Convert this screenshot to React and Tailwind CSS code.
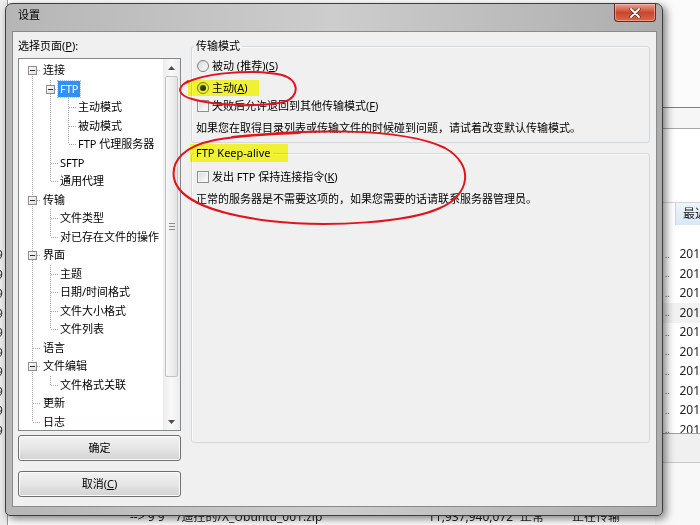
import React from 'react';

const tree = [
  { t: '连接', l: 0, box: true },
  { t: 'FTP', l: 1, box: true, sel: true },
  { t: '主动模式', l: 2 },
  { t: '被动模式', l: 2 },
  { t: 'FTP 代理服务器', l: 2 },
  { t: 'SFTP', l: 1 },
  { t: '通用代理', l: 1 },
  { t: '传输', l: 0, box: true },
  { t: '文件类型', l: 1 },
  { t: '对已存在文件的操作', l: 1 },
  { t: '界面', l: 0, box: true },
  { t: '主题', l: 1 },
  { t: '日期/时间格式', l: 1 },
  { t: '文件大小格式', l: 1 },
  { t: '文件列表', l: 1 },
  { t: '语言', l: 0 },
  { t: '文件编辑', l: 0, box: true },
  { t: '文件格式关联', l: 1 },
  { t: '更新', l: 0 },
  { t: '日志', l: 0 },
];

const LX = [13, 31, 49];
const cy = (i) => Math.round(11.25 + 18.5 * i);
const rowTop = (i) => Math.round(2 + 18.5 * i);

function TreeLines() {
  const lines = [];
  const boxes = [];
  const roots = tree.map((n, i) => (n.l === 0 ? i : -1)).filter((i) => i >= 0);
  lines.push(
    <line key="rv" x1={LX[0] + 0.5} y1={cy(roots[0])} x2={LX[0] + 0.5} y2={cy(roots[roots.length - 1])} />
  );
  tree.forEach((n, i) => {
    lines.push(<line key={'t' + i} x1={LX[n.l] + 0.5} y1={cy(i) + 0.5} x2={LX[n.l] + 8} y2={cy(i) + 0.5} />);
    const kids = [];
    for (let j = i + 1; j < tree.length && tree[j].l > n.l; j++) if (tree[j].l === n.l + 1) kids.push(j);
    if (kids.length)
      lines.push(
        <line key={'v' + i} x1={LX[n.l + 1] + 0.5} y1={rowTop(kids[0])} x2={LX[n.l + 1] + 0.5} y2={cy(kids[kids.length - 1])} />
      );
    if (n.box) {
      const x = LX[n.l];
      const c = cy(i);
      boxes.push(
        <g key={'b' + i}>
          <rect x={x - 4 + 0.5} y={c - 4 + 0.5} width={8} height={8} fill="url(#bx)" stroke="#8e8e8e" />
          <line x1={x - 2} y1={c + 0.5} x2={x + 3} y2={c + 0.5} stroke="#2b2b2b" />
        </g>
      );
    }
  });
  return (
    <svg className="absolute left-0 top-0" width="144" height="371" shapeRendering="crispEdges">
      <defs>
        <linearGradient id="bx" x1="0" y1="0" x2="1" y2="1">
          <stop offset="0" stopColor="#ffffff" />
          <stop offset="1" stopColor="#dcdcdc" />
        </linearGradient>
      </defs>
      <g stroke="#a5a5a5" strokeDasharray="1 1">{lines}</g>
      {boxes}
    </svg>
  );
}

function Arrow({ down }) {
  return (
    <svg width="7" height="4" viewBox="0 0 7 4">
      {down ? <path d="M0 0 H7 L3.5 4 Z" fill="#4d4d4d" /> : <path d="M0 4 H7 L3.5 0 Z" fill="#4d4d4d" />}
    </svg>
  );
}

function Tree() {
  return (
    <div className="flex h-[373px] border border-[#828790] bg-white">
      <div className="relative flex-1 overflow-hidden pt-[2px]">
        <TreeLines />
        {tree.map((n, i) => (
          <div
            key={i}
            className={
              'relative flex h-[18.5px] items-center whitespace-nowrap ' +
              (n.l === 0 ? 'pl-[22px]' : n.l === 1 ? 'pl-[39px]' : 'pl-[57px]')
            }
          >
            <span
              className={
                'px-[2px] h-[16px] leading-[16px] ' +
                (n.sel ? 'bg-[#3390f0] text-white outline outline-1 outline-dotted outline-[#9cc8f8]' : 'text-black')
              }
            >
              {n.t}
            </span>
          </div>
        ))}
      </div>
      <div className="flex w-[17px] flex-col bg-gradient-to-r from-[#ececec] via-[#f9f9f9] to-[#ececec]">
        <div className="flex h-[17px] items-center justify-center">
          <Arrow />
        </div>
        <div className="flex-1 px-[2px]">
          <div className="flex h-[301px] flex-col items-center justify-center gap-[2px] rounded-[2px] border border-[#c2c2c2] bg-gradient-to-r from-[#f7f7f7] via-[#efefef] to-[#e4e4e4]">
            <div className="h-px w-[6px] bg-[#8c8c8c]" />
            <div className="h-px w-[6px] bg-[#8c8c8c]" />
            <div className="h-px w-[6px] bg-[#8c8c8c]" />
          </div>
        </div>
        <div className="flex h-[17px] items-center justify-center">
          <Arrow down />
        </div>
      </div>
    </div>
  );
}

function Btn({ children, className = '' }) {
  return (
    <div
      className={
        'flex h-[26px] items-center justify-center rounded-[3px] border border-[#707070] bg-gradient-to-b from-[#f3f3f3] via-[#e6e6e6] to-[#d3d3d3] leading-[14px] text-black shadow-[inset_0_0_0_1px_#fbfbfb] ' +
        className
      }
    >
      {children}
    </div>
  );
}

function Radio({ checked }) {
  return (
    <div className="flex h-[12px] w-[12px] items-center justify-center rounded-full border border-[#7f7f7f] bg-gradient-to-br from-[#d8d8d8] to-[#ffffff]">
      {checked && <div className="h-[6px] w-[6px] rounded-full bg-gradient-to-br from-[#3e5a3e] to-[#1b2a1b]" />}
    </div>
  );
}

function Check() {
  return (
    <div className="h-[12px] w-[12px] border border-[#8f8f8f] bg-gradient-to-br from-[#dadada] to-[#ffffff] shadow-[inset_0_0_0_1px_#f4f4f4]" />
  );
}

function U({ children }) {
  return <span className="underline underline-offset-[1px]">{children}</span>;
}

function Client() {
  return (
    <div className="flex flex-1 border border-[#8a8a8a] bg-[#f0f0f0] pl-[5px] pt-[6px]">
      <div className="flex w-[163px] flex-col">
        <div className="h-[20px] pt-[1px] leading-[13px]">
          选择页面(<U>P</U>):
        </div>
        <Tree />
        <Btn className="mt-[4px]">确定</Btn>
        <Btn className="mt-[10px]">
          <span>
            取消(<U>C</U>)
          </span>
        </Btn>
      </div>
      <div className="ml-[10px] flex w-[459px] flex-col">
        <fieldset className="rounded-[3px] border border-[#d2d8dc] pb-[5px] pl-[2px] shadow-[inset_1px_1px_0_#fafafa]">
          <legend className="h-[16px] px-[2px] leading-[16px]">传输模式</legend>
          <div className="mt-[3px] flex h-[18px] items-center gap-[3px] pl-[3px]">
            <Radio />
            <span>
              被动 (推荐)(<U>S</U>)
            </span>
          </div>
          <div className="mt-[4px] flex h-[18px] items-center gap-[3px] pl-[3px]">
            <Radio checked />
            <span>
              主动(<U>A</U>)
            </span>
          </div>
          <div className="flex h-[18px] items-center gap-[3px] pl-[3px]">
            <Check />
            <span>
              失败后允许退回到其他传输模式(<U>F</U>)
            </span>
          </div>
          <div className="mt-[4px] flex h-[18px] items-center pl-[2px]">
            如果您在取得目录列表或传输文件的时候碰到问题，请试着改变默认传输模式。
          </div>
        </fieldset>
        <fieldset className="mt-[2px] h-[298px] rounded-[3px] border border-[#d2d8dc] pl-[2px] shadow-[inset_1px_1px_0_#fafafa]">
          <legend className="h-[16px] px-[2px] leading-[16px]">FTP Keep-alive</legend>
          <div className="mt-[7px] flex h-[18px] items-center gap-[3px] pl-[3px]">
            <Check />
            <span>
              发出 FTP 保持连接指令(<U>K</U>)
            </span>
          </div>
          <div className="mt-[4px] flex h-[18px] items-center pl-[2px]">
            正常的服务器是不需要这项的，如果您需要的话请联系服务器管理员。
          </div>
        </fieldset>
      </div>
    </div>
  );
}

function Dialog() {
  return (
    <div className="absolute left-[5px] top-[3px] flex h-[513px] w-[658px] flex-col rounded-b-[5px] rounded-t-[7px] border border-[#3e3e3e] bg-gradient-to-r from-[#b6b6b6] via-[#cdcdcd] to-[#adadad] pb-[8px] pl-[6px] pr-[5px] shadow-[3px_3px_8px_rgba(0,0,0,0.5)]">
      <div className="flex h-[27px]">
        <div className="pl-[6px] pt-[4px] leading-[14px] text-black">设置</div>
        <div className="ml-auto mr-[1px] flex h-[18px] w-[42px] items-center justify-center rounded-b-[4px] border border-t-0 border-[#6a2a20] bg-gradient-to-b from-[#e9a493] via-[#c8462c] to-[#d9674c] shadow-[inset_0_0_0_1px_rgba(255,200,190,0.5)]">
          <svg width="12" height="10" viewBox="0 0 12 10">
            <path d="M2 1 L10 9 M10 1 L2 9" stroke="#5b2a22" strokeWidth="3.2" strokeLinecap="round" />
            <path d="M2 1 L10 9 M10 1 L2 9" stroke="#ffffff" strokeWidth="1.8" strokeLinecap="round" />
          </svg>
        </div>
      </div>
      <Client />
    </div>
  );
}

const rows = [0, 1, 2, 3, 4, 5, 6, 7, 8, 9];

function Background() {
  return (
    <div className="absolute inset-0">
      <div className="absolute left-0 top-0 flex h-full w-[8px] flex-col overflow-hidden border-r border-[#9a9a9a] bg-[#ececec]">
        <div className="h-[245px]" />
        {rows.map((r) => (
          <div key={r} className="-ml-[4px] h-[19.5px] text-[12px] leading-[19.5px] text-[#333]">
            9
          </div>
        ))}
      </div>
      <div className="absolute right-0 top-0 flex h-full w-[45px] flex-col text-[12px] text-[#222]">
        <div className="h-[107px] bg-[#fbfbfb]" />
        <div className="h-px bg-[#7f7f7f]" />
        <div className="h-[20px] bg-[#f6f6f6]" />
        <div className="h-px bg-[#a8a8a8]" />
        <div className="h-[73px] bg-white" />
        <div className="h-px bg-[#d5d5d5]" />
        <div className="flex h-[22px]">
          <div className="w-[20px] bg-white" />
          <div className="flex-1 overflow-hidden whitespace-nowrap border-l border-[#c6d6e6] bg-gradient-to-b from-[#eef5fc] to-[#d9e7f5] pl-[7px] leading-[22px]">最近</div>
        </div>
        <div className="h-[208px] overflow-hidden bg-white">
          <div className="h-[19.5px]" />
          {rows.map((r) => (
            <div key={r} className={'flex h-[19.5px] items-center ' + (r === 3 ? 'bg-[#f2f2f2]' : '')}>
              <span className="w-[20px] pl-[10px] text-[9px] text-[#555]">‥</span>
              <span className="pl-[8px]">201</span>
            </div>
          ))}
        </div>
        <div className="h-px bg-[#a0a0a0]" />
        <div className="h-[28px] bg-[#f0f0f0]" />
        <div className="h-px bg-[#c8c8c8]" />
        <div className="flex-1 bg-[#f8f8f8]" />
      </div>
      <div className="absolute left-0 top-[509px] flex h-[16px] w-full pl-[130px] text-[12px] leading-[16px] text-[#222]">
        <span className="w-[47px]">--&gt; 9 9</span>
        <span className="w-[251px]">/遥控的/X_Ubuntu_001.zip</span>
        <span className="w-[92px]">11,937,940,072</span>
        <span className="w-[52px]">正常</span>
        <span>正在传输</span>
      </div>
    </div>
  );
}

function Annotations() {
  return (
    <div className="pointer-events-none absolute inset-0">
      <div className="absolute left-[188px] top-[80px] h-[16px] w-[71px] bg-[#ffff38] mix-blend-multiply" />
      <div className="absolute left-[190px] top-[144px] h-[18px] w-[98px] bg-[#ffff38] mix-blend-multiply" />
      <svg className="absolute left-0 top-0" width="700" height="525" viewBox="0 0 700 525">
        <g fill="none" stroke="#e0141c" strokeWidth="2" strokeLinecap="round" strokeLinejoin="round">
          <path d="M184 84 C200 74, 250 68, 282 75 C300 80, 300 97, 284 102 C260 107, 215 106, 192 99 C178 95, 176 88, 188 81" />
          <path d="M232 137 C300 130, 400 126, 445 148 C475 165, 470 195, 440 208 C410 222, 330 228, 270 221 C215 214, 178 200, 174 178 C171 160, 185 146, 215 140 C240 136, 270 134, 300 133" />
        </g>
      </svg>
    </div>
  );
}

export default function App() {
  return (
    <div className="relative h-[525px] w-[700px] overflow-hidden bg-white font-['Noto_Sans','Noto_Sans_CJK_SC',sans-serif] text-[11px] text-black">
      <Background />
      <Dialog />
      <Annotations />
    </div>
  );
}
